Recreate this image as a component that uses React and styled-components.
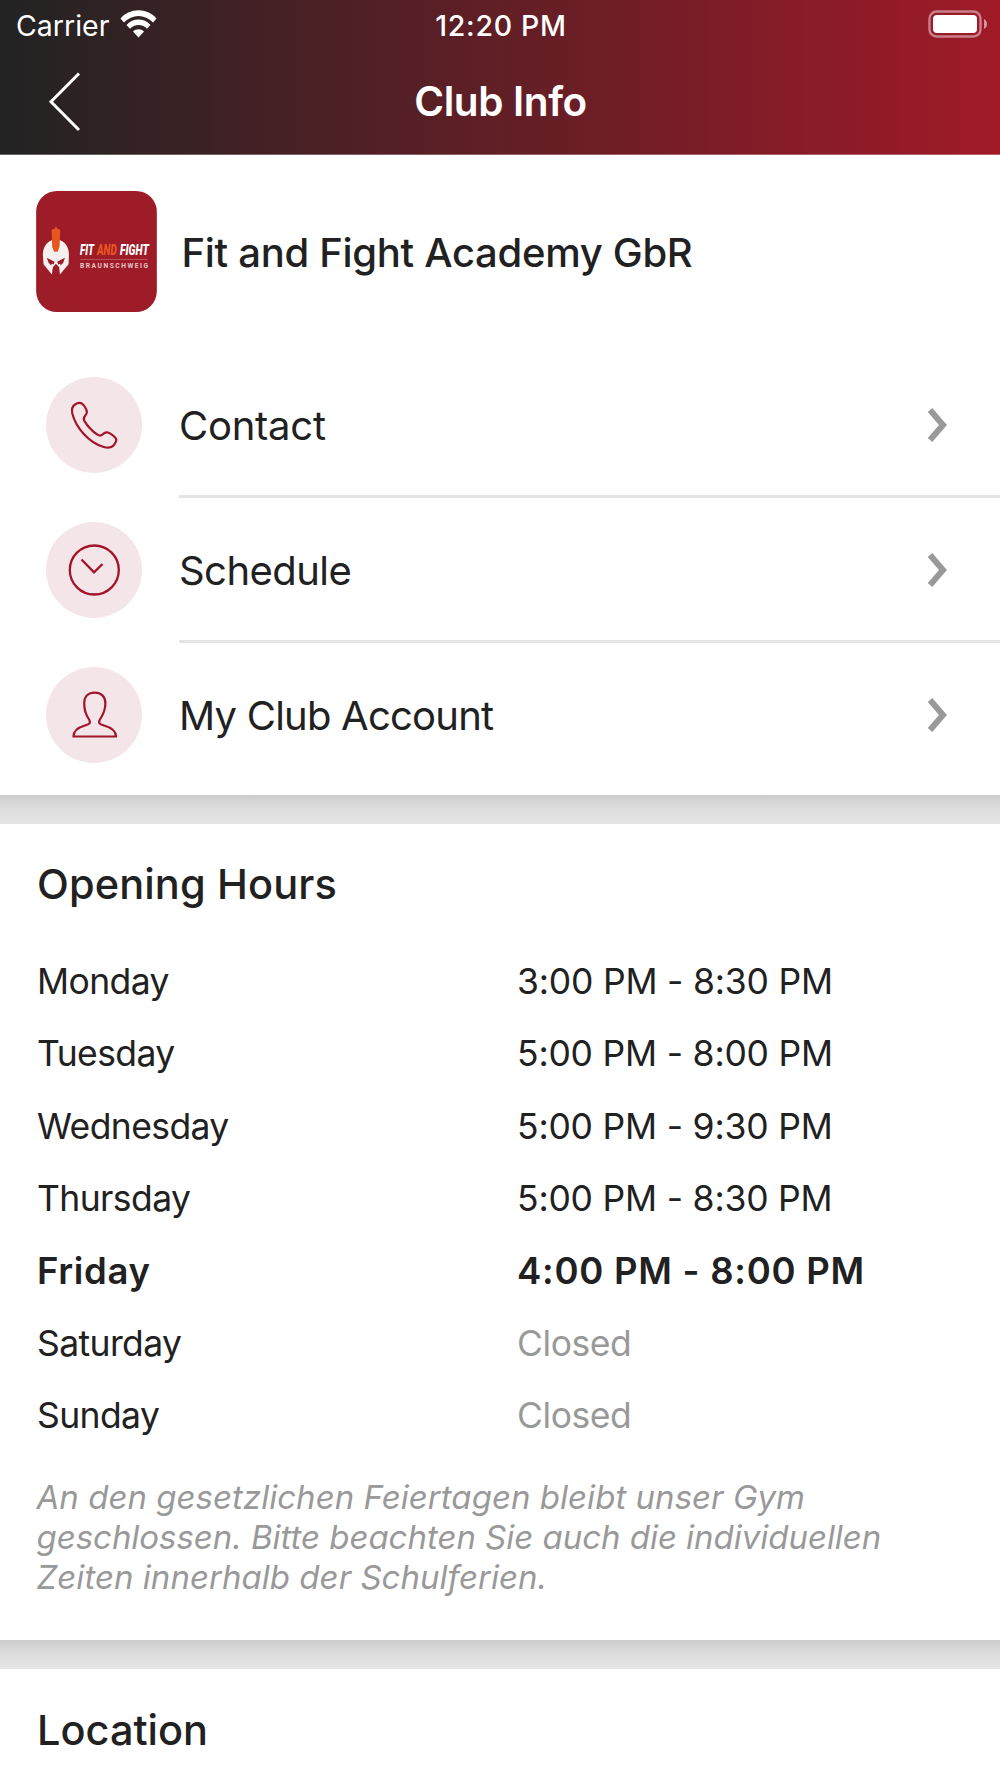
import React from "react";
import styled, { createGlobalStyle } from "styled-components";

const hours = [
  { day: "Monday", time: "3:00 PM - 8:30 PM" },
  { day: "Tuesday", time: "5:00 PM - 8:00 PM" },
  { day: "Wednesday", time: "5:00 PM - 9:30 PM" },
  { day: "Thursday", time: "5:00 PM - 8:30 PM" },
  { day: "Friday", time: "4:00 PM - 8:00 PM", today: true },
  { day: "Saturday", time: "Closed", closed: true },
  { day: "Sunday", time: "Closed", closed: true },
];

const PhoneIcon = () => (
  <svg viewBox="0 0 96 96" fill="none" stroke="#a3142b" strokeWidth="2.200">
    <path d="M29 27.500C26 29.500 25.500 32.500 26.300 36.500C30 51 43 65.500 57 69.700C61.500 71 65.500 71 67.500 68.500L69.500 65.500C70.800 63.500 70.500 61.500 68.500 59.800C66.500 58 64.500 56.500 62 55.500C59.500 54.800 58 56 56.500 57.500C55 59 53.500 59 51.500 57.700C46 54 41.500 49 38.300 43.800C37 41.500 37.500 40.500 39.300 38.500C41.200 36.500 41.300 34.800 40.300 32.500C39.200 30 37.800 28 36 26.700C34 25.300 31.500 25.800 29 27.500Z" />
  </svg>
);

const ClockIcon = () => (
  <svg viewBox="0 0 96 96" fill="none" stroke="#a3142b" strokeWidth="2.300">
    <circle cx="48.300" cy="48" r="24.500" />
    <path d="M35.500 37.500L48 50.300L56.500 42" />
  </svg>
);

const PersonIcon = () => (
  <svg viewBox="0 0 96 96" fill="none" stroke="#a3142b" strokeWidth="2.200">
    <path d="M27.500 69.500H70C70 64 65 60.500 58 58.500C52.500 56.800 52 55.500 54.500 51.500C57.500 47 59.400 41 59.400 36C59.400 29.500 55 25.700 48.800 25.700C42.500 25.700 38.200 29.500 38.200 36C38.200 41 39.500 47 42.500 51.500C45 55.500 44.500 56.800 39 58.500C32 60.500 27.500 64 27.500 69.500Z" />
  </svg>
);

const links = [
  { label: "Contact", icon: <PhoneIcon />, spacing: "-0.25px" },
  { label: "Schedule", icon: <ClockIcon />, spacing: "-0.55px" },
  { label: "My Club Account", icon: <PersonIcon />, spacing: "-0.78px" },
];

const ClubLogo = () => (
  <svg width="121" height="121" viewBox="20 18 361 362">
    <rect x="20" y="18" width="361" height="362" rx="62" fill="#9e1b28" />
    <path
      d="M40 208C40 188 50 172 66 165L92 165C109 171 118 188 118 208L117 237L91 268L89 246L79 236L70 246L67 268L42 237Z"
      fill="#f4f0f0"
    />
    <path d="M52 218L75 230L72 238L66 236L65 241L57 233Z" fill="#9e1b28" />
    <path d="M106 218L83 230L86 238L92 236L93 241L101 233Z" fill="#9e1b28" />
    <path d="M66 134L76 130L79 124L83 130L92 135L90 185L84 200L74 200L68 186Z" fill="#e8561f" />
    <g fontFamily="Roboto, sans-serif" fontWeight="900" fontStyle="italic" fontSize="44">
      <text x="151" y="210" fill="#fff" textLength="42" lengthAdjust="spacingAndGlyphs">FIT</text>
      <text x="202" y="210" fill="#e8561f" textLength="59" lengthAdjust="spacingAndGlyphs">AND</text>
      <text x="271" y="210" fill="#fff" textLength="86" lengthAdjust="spacingAndGlyphs">FIGHT</text>
    </g>
    <path d="M152 223H354" stroke="#d48a90" strokeWidth="1.500" />
    <text
      x="151"
      y="249"
      fill="#e9c5c8"
      fontFamily="Roboto, sans-serif"
      fontWeight="700"
      fontSize="20"
      textLength="204"
    >
      BRAUNSCHWEIG
    </text>
  </svg>
);

const App = () => {
  return (
    <>
      <GlobalStyle />
      <Screen>
        <Header>
          <StatusBar>
            <Carrier>
              Carrier
              <svg width="37" height="28" viewBox="0 0 37 28" fill="#fff">
                <path d="M0.500 8.500C10 -2.400 27 -2.400 36.500 8.500L33 12.500C25 3.700 12 3.700 4 12.500Z" />
                <path d="M6.500 15C13 7.700 24 7.700 30.500 15L27 18.700C22.500 13.700 14.500 13.700 10 18.700Z" />
                <path d="M13 21.500C16 18.500 21 18.500 24 21.500L18.500 27.500Z" />
              </svg>
            </Carrier>
            <Clock>12:20 PM</Clock>
            <Battery>
              <svg width="60" height="28" viewBox="0 0 60 28">
                <rect x="1.500" y="1.500" width="51" height="25" rx="7" fill="none" stroke="#fff" strokeOpacity="0.450" strokeWidth="2.400" />
                <rect x="5" y="5" width="44" height="18" rx="4" fill="#fff" />
                <path d="M56 9C60 11 60 17 56 19Z" fill="#fff" fillOpacity="0.550" />
              </svg>
            </Battery>
          </StatusBar>
          <NavBar>
            <BackButton aria-label="Back">
              <svg width="34" height="60" viewBox="0 0 34 60" fill="none" stroke="#fff" strokeWidth="3">
                <path d="M31 1.500L3 29.800L31 58" />
              </svg>
            </BackButton>
            <Title>Club Info</Title>
          </NavBar>
        </Header>

        <Club>
          <ClubLogo />
          <ClubName>Fit and Fight Academy GbR</ClubName>
        </Club>

        <Menu>
          {links.map(({ label, icon, spacing }) => (
            <MenuRow key={label}>
              <IconCircle>{icon}</IconCircle>
              <MenuBody>
                <MenuLabel $spacing={spacing}>{label}</MenuLabel>
                <Chevron width="21" height="36" viewBox="0 0 21 36">
                  <path d="M3 3L16 18L3 33" />
                </Chevron>
              </MenuBody>
            </MenuRow>
          ))}
        </Menu>

        <Gap />

        <Section>
          <SectionTitle $spacing="0.12px">Opening Hours</SectionTitle>
          <HoursList>
            {hours.map(({ day, time, today, closed }) => (
              <HoursRow key={day} $today={today}>
                <Day $today={today}>{day}</Day>
                <Time $today={today} $closed={closed}>{time}</Time>
              </HoursRow>
            ))}
          </HoursList>
          <Note>
            <NoteLine>An den gesetzlichen Feiertagen bleibt unser Gym</NoteLine>
            <NoteLine $spacing="-0.03px">
              geschlossen. Bitte beachten Sie auch die individuellen
            </NoteLine>
            <NoteLine>Zeiten innerhalb der Schulferien.</NoteLine>
          </Note>
        </Section>

        <Gap />

        <Section $top="34px">
          <SectionTitle>Location</SectionTitle>
        </Section>
      </Screen>
    </>
  );
};

const GlobalStyle = createGlobalStyle`
  * {
    box-sizing: border-box;
  }
  body {
    margin: 0;
    background: #fff;
    color: #212121;
    font-family: Inter, "Liberation Sans", sans-serif;
  }
  svg {
    display: block;
    flex: none;
  }
`;

const Screen = styled.div`
  width: 1000px;
  height: 1778px;
  overflow: hidden;
  background: #fff;
`;

const Header = styled.header`
  height: 155px;
  color: #fff;
  background: linear-gradient(90deg, #222323, #a01a28);
  border-bottom: 1px solid rgba(255, 255, 255, 0.3);
`;

const StatusBar = styled.div`
  display: grid;
  grid-template-columns: 1fr auto 1fr;
  align-items: center;
  height: 51px;
  padding: 0 12px 0 16px;
  font-size: 28.5px;
`;

const Carrier = styled.div`
  display: flex;
  align-items: center;
  gap: 10.5px;

  svg {
    margin-top: -4px;
  }
`;

const Clock = styled.div`
  padding-right: 2px;
  font-weight: 500;
  letter-spacing: 0.7px;
`;

const Battery = styled.div`
  display: flex;
  justify-content: flex-end;
  margin-top: -3px;
`;

const NavBar = styled.div`
  display: grid;
  grid-template-columns: 160px 1fr 160px;
  align-items: center;
  height: 102px;
`;

const BackButton = styled.button`
  display: flex;
  padding: 0 0 0 47.5px;
  border: 0;
  background: none;
`;

const Title = styled.h1`
  margin: 0;
  padding: 0 0 2px 1px;
  text-align: center;
  font-size: 40.5px;
  font-weight: 600;
  letter-spacing: -0.4px;
`;

const Club = styled.div`
  display: flex;
  align-items: center;
  gap: 24.5px;
  height: 197px;
  padding: 0 36px 4px;
`;

const ClubName = styled.h2`
  margin: 0;
  padding-top: 2px;
  font-size: 40px;
  font-weight: 500;
  letter-spacing: -0.3px;
  white-space: nowrap;
`;

const Menu = styled.nav`
  height: 443px;
`;

const IconCircle = styled.div`
  width: 96px;
  height: 96px;
  margin-right: 37px;
  border-radius: 50%;
  background: #f3e5e8;
`;

const MenuBody = styled.div`
  flex: 1;
  display: flex;
  align-items: center;
  justify-content: space-between;
  height: 147px;
  padding: 5px 52.5px 0 0;
  border-bottom: 3px solid #e4e4e4;
`;

const MenuRow = styled.div`
  display: flex;
  align-items: center;
  height: 145px;
  padding-left: 46px;

  &:last-child ${MenuBody} {
    border-color: transparent;
  }
`;

const MenuLabel = styled.span`
  font-size: 40px;
  letter-spacing: ${({ $spacing }) => $spacing};
`;

const Chevron = styled.svg`
  margin-bottom: 2px;
  fill: none;
  stroke: #999;
  stroke-width: 6px;
`;

const Gap = styled.div`
  height: 29px;
  background: linear-gradient(#cdcdcd, #dedede 50%, #e5e5e5);
`;

const Section = styled.section`
  height: 816px;
  padding: ${({ $top }) => $top || "33px"} 37px 0;
`;

const SectionTitle = styled.h2`
  margin: 0;
  line-height: 54px;
  font-size: 41.5px;
  font-weight: 500;
  letter-spacing: ${({ $spacing }) => $spacing || "0"};
`;

const HoursList = styled.div`
  padding-top: 35px;
`;

const HoursRow = styled.div`
  display: grid;
  grid-template-columns: 480px 1fr;
  height: 72.4px;
  line-height: ${({ $today }) => ($today ? "70.4px" : "72.4px")};
  font-size: ${({ $today }) => ($today ? "36.5px" : "35.5px")};
  font-weight: ${({ $today }) => ($today ? 600 : 400)};
`;

const Day = styled.span`
  letter-spacing: ${({ $today }) => ($today ? "0.65px" : "-0.6px")};
`;

const Time = styled.span`
  color: ${({ $closed }) => ($closed ? "#999" : "inherit")};
  letter-spacing: ${({ $today, $closed }) =>
    $today ? "0.73px" : $closed ? "-0.45px" : "-0.2px"};
`;

const Note = styled.p`
  display: flex;
  flex-direction: column;
  margin: 24px 0 0 -0.5px;
  color: #999;
  font-size: 33px;
  font-style: italic;
  line-height: 40.3px;
  white-space: nowrap;
`;

const NoteLine = styled.span`
  letter-spacing: ${({ $spacing }) => $spacing || "0.03px"};
`;

export default App;
